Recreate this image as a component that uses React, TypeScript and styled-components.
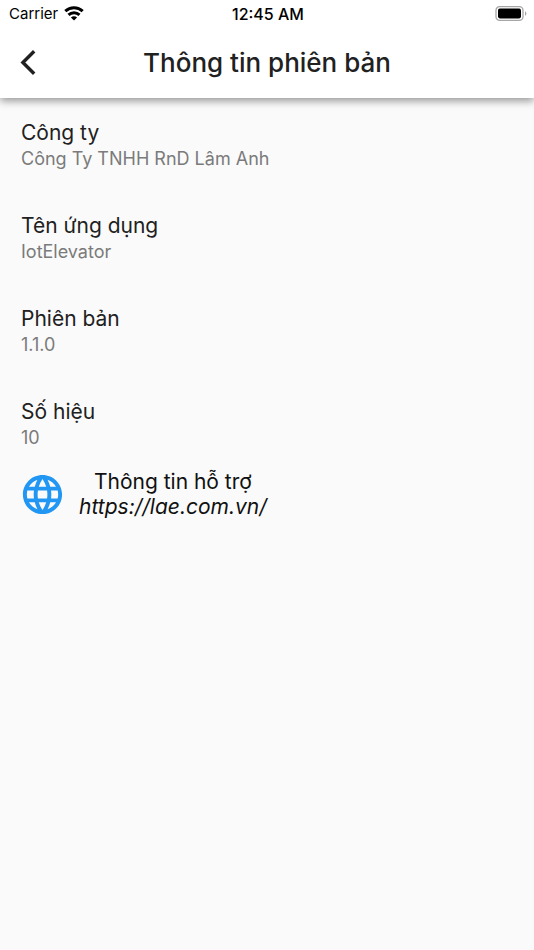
import React from "react";
import styled, { createGlobalStyle } from "styled-components";

const GlobalStyle = createGlobalStyle`
  * {
    box-sizing: border-box;
  }
  body {
    margin: 0;
    background: #fafafa;
    color: #212121;
    font-family: Inter, "Noto Sans", sans-serif;
  }
`;

const Screen = styled.div`
  min-height: 100vh;
  background: #fafafa;
`;

const TopArea = styled.div`
  background: #ffffff;
  box-shadow: 0 3px 8px rgba(0, 0, 0, 0.4);
`;

const StatusBar = styled.div`
  display: grid;
  grid-template-columns: 1fr auto 1fr;
  align-items: center;
  height: 27px;
  padding: 0 7px 0 9px;
  color: #000000;
  font-size: 15px;
  line-height: 20px;
`;

const Carrier = styled.span`
  display: flex;
  align-items: center;
  gap: 6px;
`;

const Clock = styled.span`
  font-size: 16px;
  font-weight: 500;
`;

const BatteryIcon = styled.svg`
  justify-self: end;
`;

const AppBar = styled.header`
  display: grid;
  grid-template-columns: 56px 1fr 56px;
  align-items: center;
  height: 71px;
`;

const BackButton = styled.button`
  display: flex;
  align-items: center;
  justify-content: center;
  width: 56px;
  height: 56px;
  padding: 0;
  border: 0;
  background: none;
  color: #212121;
  cursor: pointer;
`;

const Title = styled.h1`
  margin: 0;
  font-size: 26px;
  font-weight: 500;
  line-height: 32px;
  text-align: center;
`;

const InfoList = styled.dl`
  display: flex;
  flex-direction: column;
  gap: 40px;
  margin: 0;
  padding: 20px 21px 0;
`;

const InfoItem = styled.div``;

const Label = styled.dt`
  font-size: 21px;
  line-height: 29px;
`;

const Value = styled.dd`
  margin: 0;
  color: #7b7b7b;
  font-size: 18px;
  line-height: 24px;
`;

const Support = styled.section`
  display: flex;
  align-items: center;
  gap: 13px;
  padding: 19px;
`;

const SupportText = styled.div`
  display: flex;
  flex-direction: column;
  align-items: center;
  color: #111111;
  font-size: 21px;
  line-height: 25px;
`;

const SiteLink = styled.a`
  color: inherit;
  font-style: italic;
  text-decoration: none;
`;

const items = [
  { label: "Công ty", value: "Công Ty TNHH RnD Lâm Anh" },
  { label: "Tên ứng dụng", value: "IotElevator" },
  { label: "Phiên bản", value: "1.1.0" },
  { label: "Số hiệu", value: "10" },
];

const WifiIcon = () => (
  <svg width="20" height="15" viewBox="0 0 20 15" fill="none" stroke="#000" strokeWidth="3" aria-hidden="true">
    <path d="M1.3 5.1C6.2 .5 13.8 .5 18.7 5.1" />
    <path d="M4.5 8.8C7.6 5.9 12.4 5.9 15.5 8.8" />
    <path d="M10 14.6L6.9 11.5C8.7 9.9 11.3 9.9 13.1 11.5Z" fill="#000" stroke="none" />
  </svg>
);

const Battery = () => (
  <BatteryIcon width="32" height="15" viewBox="0 0 32 15" role="img" aria-label="Battery full">
    <rect x="1" y="0.7" width="27" height="13.6" rx="3.6" fill="none" stroke="#a6a6a6" strokeWidth="1.3" />
    <rect x="3" y="2.6" width="23" height="9.8" rx="1.8" fill="#000" />
    <path d="M30 5.2C31.9 6 31.9 9 30 9.8Z" fill="#a6a6a6" />
  </BatteryIcon>
);

const ChevronIcon = () => (
  <svg width="16" height="26" viewBox="0 0 16 26" fill="none" stroke="currentColor" strokeWidth="3.4" aria-hidden="true">
    <path d="M14.2 1.2L2.9 12.5L14.2 23.8" />
  </svg>
);

const GlobeIcon = () => (
  <svg width="47" height="47" viewBox="0 0 24 24" fill="#2196f3" aria-hidden="true">
    <path d="M11.99 2C6.47 2 2 6.48 2 12s4.47 10 9.99 10C17.52 22 22 17.52 22 12S17.52 2 11.99 2zm6.93 6h-2.95c-.32-1.25-.78-2.45-1.38-3.56 1.84.63 3.37 1.91 4.33 3.56zM12 4.04c.83 1.2 1.48 2.53 1.91 3.96h-3.82c.43-1.43 1.08-2.76 1.91-3.96zM4.26 14C4.1 13.36 4 12.69 4 12s.1-1.36.26-2h3.38c-.08.66-.14 1.32-.14 2 0 .68.06 1.34.14 2H4.26zm.82 2h2.95c.32 1.25.78 2.45 1.38 3.56-1.84-.63-3.37-1.9-4.33-3.56zm2.95-8H5.08c.96-1.66 2.49-2.93 4.33-3.56C8.81 5.55 8.35 6.75 8.03 8zM12 19.96c-.83-1.2-1.48-2.53-1.91-3.96h3.82c-.43 1.43-1.08 2.76-1.91 3.96zM14.34 14H9.66c-.09-.66-.16-1.32-.16-2 0-.68.07-1.35.16-2h4.68c.09.65.16 1.32.16 2 0 .68-.07 1.34-.16 2zm.25 5.56c.6-1.11 1.06-2.31 1.38-3.56h2.95c-.96 1.65-2.49 2.93-4.33 3.56zM16.36 14c.08-.66.14-1.32.14-2 0-.68-.06-1.34-.14-2h3.38c.16.64.26 1.31.26 2s-.1 1.36-.26 2h-3.38z" />
  </svg>
);

export default function App() {
  return (
    <Screen>
      <GlobalStyle />
      <TopArea>
        <StatusBar>
          <Carrier>
            Carrier
            <WifiIcon />
          </Carrier>
          <Clock>12:45 AM</Clock>
          <Battery />
        </StatusBar>
        <AppBar>
          <BackButton type="button" aria-label="Back">
            <ChevronIcon />
          </BackButton>
          <Title>Thông tin phiên bản</Title>
        </AppBar>
      </TopArea>
      <main>
        <InfoList>
          {items.map((item) => (
            <InfoItem key={item.label}>
              <Label>{item.label}</Label>
              <Value>{item.value}</Value>
            </InfoItem>
          ))}
        </InfoList>
        <Support>
          <GlobeIcon />
          <SupportText>
            <span>Thông tin hỗ trợ</span>
            <SiteLink href="https://lae.com.vn/">https://lae.com.vn/</SiteLink>
          </SupportText>
        </Support>
      </main>
    </Screen>
  );
}
